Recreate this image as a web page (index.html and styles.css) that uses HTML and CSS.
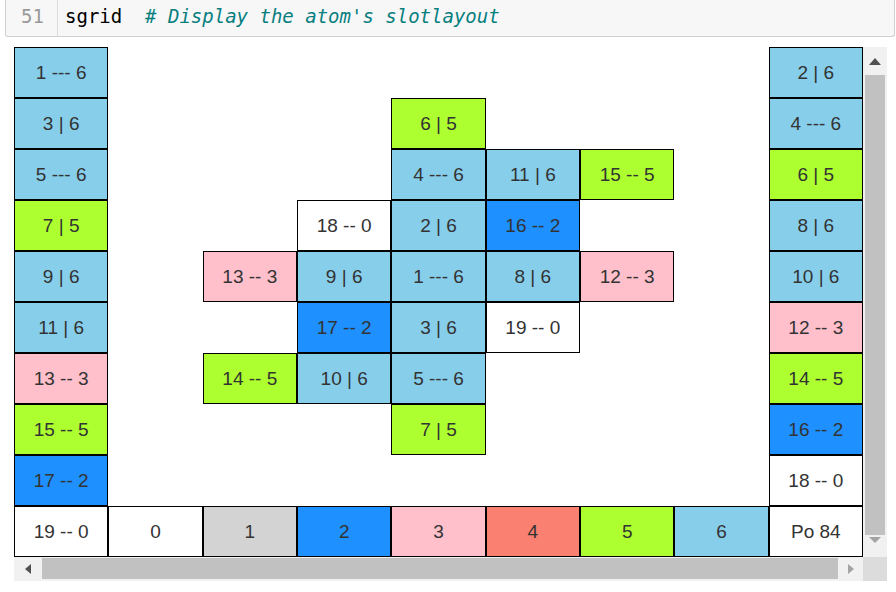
FILE: index.html
```html
<!DOCTYPE html>
<html lang="en">
<head>
    <meta charset="UTF-8">
    <title>Slot layout</title>
    <link rel="stylesheet" href="styles.css">
</head>
<body>

    <!-- Code cell -->
    <div class="code-cell">
        <div class="gutter">51</div>
        <pre class="code">sgrid  <span class="comment"># Display the atom's slotlayout</span></pre>
    </div>

    <!-- Output: scrollable slot grid -->
    <div class="output">
        <div class="viewport">
            <div class="slots">
                <!-- row 1 -->
                <div class="slot sky">1 --- 6</div><div></div><div></div><div></div><div></div><div></div><div></div><div></div><div class="slot sky">2 | 6</div>
                <!-- row 2 -->
                <div class="slot sky">3 | 6</div><div></div><div></div><div></div><div class="slot lime">6 | 5</div><div></div><div></div><div></div><div class="slot sky">4 --- 6</div>
                <!-- row 3 -->
                <div class="slot sky">5 --- 6</div><div></div><div></div><div></div><div class="slot sky">4 --- 6</div><div class="slot sky">11 | 6</div><div class="slot lime">15 -- 5</div><div></div><div class="slot lime">6 | 5</div>
                <!-- row 4 -->
                <div class="slot lime">7 | 5</div><div></div><div></div><div class="slot white">18 -- 0</div><div class="slot sky">2 | 6</div><div class="slot blue">16 -- 2</div><div></div><div></div><div class="slot sky">8 | 6</div>
                <!-- row 5 -->
                <div class="slot sky">9 | 6</div><div></div><div class="slot pink">13 -- 3</div><div class="slot sky">9 | 6</div><div class="slot sky">1 --- 6</div><div class="slot sky">8 | 6</div><div class="slot pink">12 -- 3</div><div></div><div class="slot sky">10 | 6</div>
                <!-- row 6 -->
                <div class="slot sky">11 | 6</div><div></div><div></div><div class="slot blue">17 -- 2</div><div class="slot sky">3 | 6</div><div class="slot white">19 -- 0</div><div></div><div></div><div class="slot pink">12 -- 3</div>
                <!-- row 7 -->
                <div class="slot pink">13 -- 3</div><div></div><div class="slot lime">14 -- 5</div><div class="slot sky">10 | 6</div><div class="slot sky">5 --- 6</div><div></div><div></div><div></div><div class="slot lime">14 -- 5</div>
                <!-- row 8 -->
                <div class="slot lime">15 -- 5</div><div></div><div></div><div></div><div class="slot lime">7 | 5</div><div></div><div></div><div></div><div class="slot blue">16 -- 2</div>
                <!-- row 9 -->
                <div class="slot blue">17 -- 2</div><div></div><div></div><div></div><div></div><div></div><div></div><div></div><div class="slot white">18 -- 0</div>
                <!-- row 10: legend -->
                <div class="slot white">19 -- 0</div><div class="slot white">0</div><div class="slot grey">1</div><div class="slot blue">2</div><div class="slot pink">3</div><div class="slot salmon">4</div><div class="slot lime">5</div><div class="slot sky">6</div><div class="slot white">Po 84</div>
            </div>
        </div>

        <!-- Vertical scrollbar -->
        <div class="vbar">
            <div class="arrow">
                <svg width="12" height="7" viewBox="0 0 12 7"><polygon points="0,7 12,7 6,0" fill="#505050"/></svg>
            </div>
            <div class="vthumb"></div>
            <div class="arrow">
                <svg width="12" height="6" viewBox="0 0 12 6"><polygon points="0,0 12,0 6,6" fill="#a3a3a3"/></svg>
            </div>
        </div>

        <!-- Horizontal scrollbar -->
        <div class="hbar">
            <div class="arrow">
                <svg width="6" height="10" viewBox="0 0 6 10"><polygon points="6,0 6,10 0,5" fill="#505050"/></svg>
            </div>
            <div class="hthumb"></div>
            <div class="arrow">
                <svg width="6" height="10" viewBox="0 0 6 10"><polygon points="0,0 0,10 6,5" fill="#a3a3a3"/></svg>
            </div>
        </div>

        <div class="corner"></div>
    </div>

</body>
</html>
```

FILE: styles.css
```css
/* Global */
* {
    margin: 0;
    padding: 0;
    box-sizing: border-box;
}

body {
    background: white;
    font-family: 'Liberation Sans', Arial, sans-serif;
}

/* Code cell */
.code-cell {
    display: flex;
    height: 37px;
    margin: 0 1px 0 5px;
    background: #f7f7f7;
    border: 1px solid #cfcfcf;
    border-top: none;
    border-radius: 0 0 3px 3px;
    font-family: 'DejaVu Sans Mono', monospace;
    font-size: 19px;
    line-height: 33px;
}

.gutter {
    width: 52px;
    padding-right: 13px;
    text-align: right;
    color: #999;
    border-right: 1px solid #dddddd;
}

.code {
    padding-left: 7px;
    font-family: inherit;
    color: #000;
}

.comment {
    font-style: italic;
    color: #087f7f;
}

/* Output area */
.output {
    display: grid;
    grid-template-columns: 849px 24px;
    grid-template-rows: 510px 24px;
    margin: 10px 0 0 14px;
}

.viewport {
    overflow: hidden;
}

.slots {
    display: grid;
    grid-template-columns: repeat(9, 1fr);
    grid-template-rows: repeat(10, 51px);
    width: 849px;
}

.slot {
    display: flex;
    align-items: center;
    justify-content: center;
    border: 1px solid black;
    font-size: 19px;
    color: #333;
}

.sky    { background: #87ceeb; }
.lime   { background: #adff2f; }
.blue   { background: #1e90ff; }
.pink   { background: #ffc0cb; }
.salmon { background: #fa8072; }
.grey   { background: #d3d3d3; }
.white  { background: #ffffff; }

/* Scrollbars */
.vbar {
    display: flex;
    flex-direction: column;
    background: #f1f1f1;
    padding: 0 2px;
}

.vbar .arrow {
    height: 28px;
    display: flex;
    align-items: center;
    justify-content: center;
}

.vbar .arrow:last-child {
    height: 22px;
    align-items: flex-start;
    padding-top: 2px;
}

.vthumb {
    flex: 1;
    background: #c1c1c1;
}

.hbar {
    display: flex;
    background: #f1f1f1;
    padding: 1px 0 2px;
}

.hbar .arrow {
    width: 28px;
    display: flex;
    align-items: center;
    justify-content: center;
}

.hbar .arrow:last-child {
    width: 25px;
}

.hthumb {
    flex: 1;
    background: #c1c1c1;
}

.corner {
    background: #dcdcdc;
}
```
